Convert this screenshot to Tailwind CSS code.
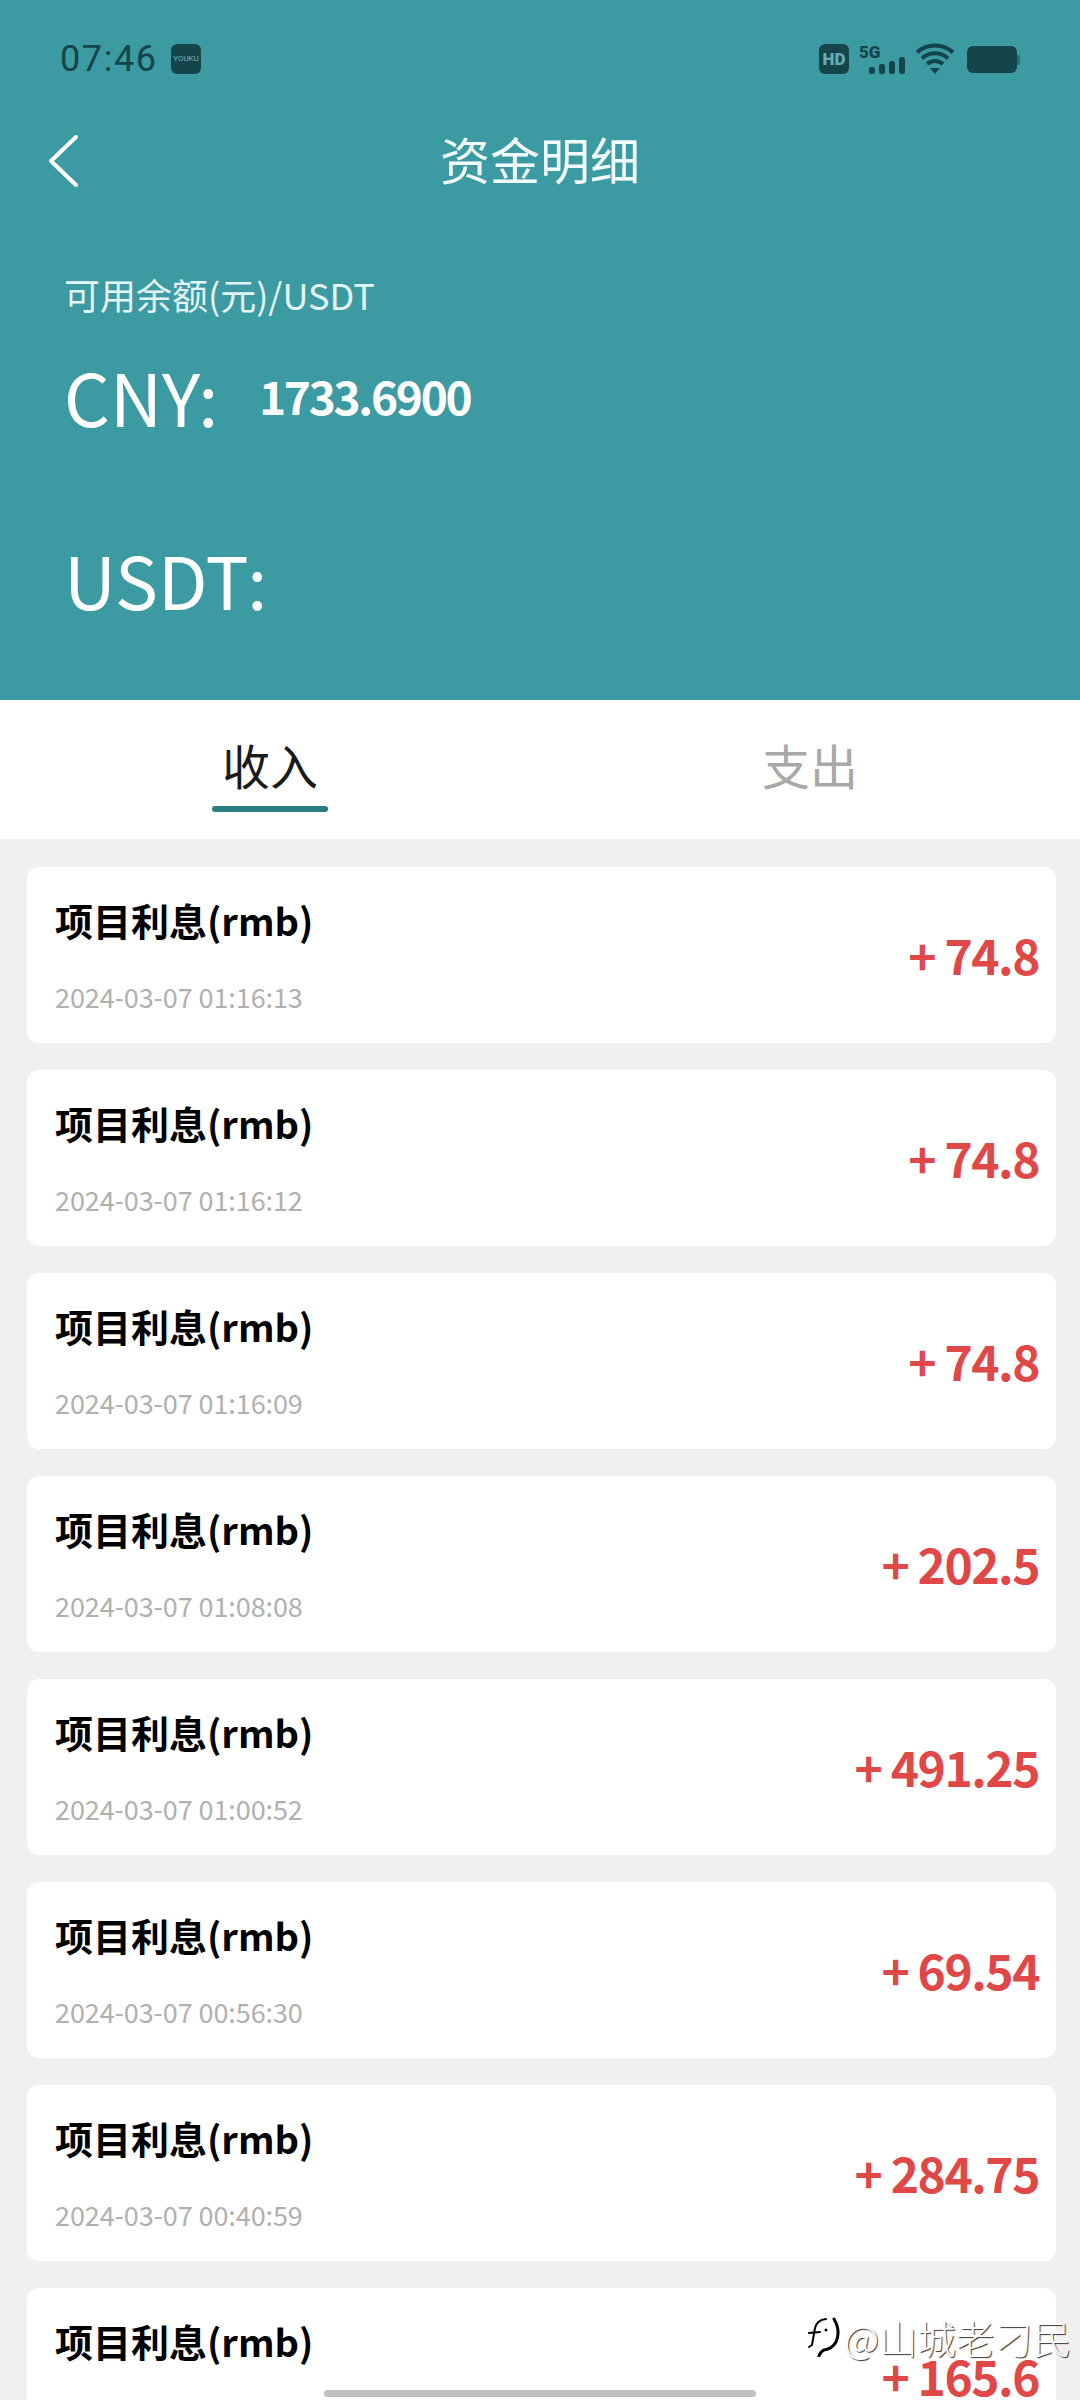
<!DOCTYPE html>
<html lang="en">
<head>
  <meta charset="UTF-8">
  <title>资金明细</title>
  <script src="https://cdn.jsdelivr.net/npm/@tailwindcss/browser@4"></script>
</head>
<body class="bg-[#f0f0f0] font-['Noto_Sans_CJK_SC','Noto_Sans',sans-serif]">
<div class="relative w-[1080px] h-[2400px] overflow-hidden">

  <!-- header -->
  <div class="bg-[#3c9aa2] h-[700px] text-white">
    <div class="flex items-center justify-between h-[116px] pl-[60px] pr-[60px] pt-[1px]">
      <div class="flex items-center gap-[16px]">
        <span class="text-[36px] leading-none text-[#14454b] font-['Roboto',sans-serif] tracking-[1.6px] w-[95px]">07:46</span>
        <span class="flex items-center justify-center w-[30px] h-[30px] rounded-[6px] bg-[#15444a] text-[#6fb5ba] text-[8px] leading-none font-['Roboto',sans-serif]">YOUKU</span>
      </div>
      <svg width="201" height="32" viewBox="0 0 201 32" class="shrink-0">
        <rect x="0" y="1" width="30" height="30" rx="6" fill="#15444a"/>
        <text x="15" y="22" text-anchor="middle" font-family="Roboto" font-weight="900" font-size="17" fill="#5fb0b6">HD</text>
        <text x="40" y="15" font-family="Roboto" font-weight="900" font-size="17" fill="#15444a">5G</text>
        <rect x="50" y="24" width="6" height="7" rx="2.5" fill="#15444a"/>
        <rect x="60" y="21" width="6" height="10" rx="2.5" fill="#15444a"/>
        <rect x="70" y="18" width="6" height="13" rx="2.5" fill="#15444a"/>
        <rect x="80" y="14" width="6" height="17" rx="2.5" fill="#15444a"/>
        <path d="M98 9.5 A27 27 0 0 1 134 9.5" fill="none" stroke="#15444a" stroke-width="4"/>
        <path d="M103 15.5 A19 19 0 0 1 129 15.5" fill="none" stroke="#15444a" stroke-width="4"/>
        <path d="M108 21 A12 12 0 0 1 124 21" fill="none" stroke="#15444a" stroke-width="4"/>
        <path d="M111 25 L121 25 L116 31 Z" fill="#15444a"/>
        <rect x="148" y="3" width="50" height="27" rx="6" fill="#15444a"/>
        <rect x="198" y="12" width="3" height="10" rx="1" fill="#15444a" fill-opacity="0.5"/>
      </svg>
    </div>

    <div class="relative flex items-center justify-center h-[90px]">
      <svg width="32" height="54" viewBox="0 0 32 54" class="absolute left-[47px] top-[18px]">
        <path d="M29 3 L4 27 L29 51" fill="none" stroke="#fff" stroke-width="4" stroke-linecap="round" stroke-linejoin="round"/>
      </svg>
      <h1 class="text-[50px] leading-none text-[#f2fbfb] -translate-y-[3px]">资金明细</h1>
    </div>

    <div class="pl-[64px] pt-[65px]">
      <p class="text-[36px] leading-[46px] text-[#e4f5f5]">可用余额(元)/USDT</p>
      <div class="flex items-center mt-[35px] h-[88px]">
        <span class="text-[72px] leading-[88px] font-normal w-[195px]">CNY:</span>
        <span class="text-[46px] leading-[88px] font-bold tracking-[-2.3px] -translate-y-[1px]">1733.6900</span>
      </div>
      <div class="text-[72px] leading-[88px] font-normal mt-[95px]">USDT:</div>
    </div>
  </div>

  <!-- tabs -->
  <div class="grid grid-cols-2 bg-white h-[139px]">
    <div class="flex flex-col items-center pt-[36px]">
      <span class="text-[48px] leading-[56px] text-[#1a1a1a]">收入</span>
      <span class="w-[116px] h-[6px] mt-[14px] rounded-full bg-[#2a7d80]"></span>
    </div>
    <div class="flex flex-col items-center pt-[36px]">
      <span class="text-[48px] leading-[56px] text-[#a8a8a8]">支出</span>
    </div>
  </div>

  <!-- list -->
  <div class="flex flex-col gap-[27px] pl-[27px] pr-[24px] pt-[28px]">
    <div class="flex items-center justify-between h-[176px] shrink-0 pl-[28px] pr-[17px] bg-white rounded-[12px]">
      <div class="mb-[3px]"><p class="text-[38px] leading-[56px] font-bold text-black">项目利息(rmb)</p><p class="text-[27px] leading-[36px] mt-[31px] text-[#b0b0b0] tracking-[-0.1px]">2024-03-07 01:16:13</p></div>
      <span class="text-[48px] leading-none font-bold text-[#e04848] tracking-[-1.5px] mb-[3px]">+ 74.8</span>
    </div>
    <div class="flex items-center justify-between h-[176px] shrink-0 pl-[28px] pr-[17px] bg-white rounded-[12px]">
      <div class="mb-[3px]"><p class="text-[38px] leading-[56px] font-bold text-black">项目利息(rmb)</p><p class="text-[27px] leading-[36px] mt-[31px] text-[#b0b0b0] tracking-[-0.1px]">2024-03-07 01:16:12</p></div>
      <span class="text-[48px] leading-none font-bold text-[#e04848] tracking-[-1.5px] mb-[3px]">+ 74.8</span>
    </div>
    <div class="flex items-center justify-between h-[176px] shrink-0 pl-[28px] pr-[17px] bg-white rounded-[12px]">
      <div class="mb-[3px]"><p class="text-[38px] leading-[56px] font-bold text-black">项目利息(rmb)</p><p class="text-[27px] leading-[36px] mt-[31px] text-[#b0b0b0] tracking-[-0.1px]">2024-03-07 01:16:09</p></div>
      <span class="text-[48px] leading-none font-bold text-[#e04848] tracking-[-1.5px] mb-[3px]">+ 74.8</span>
    </div>
    <div class="flex items-center justify-between h-[176px] shrink-0 pl-[28px] pr-[17px] bg-white rounded-[12px]">
      <div class="mb-[3px]"><p class="text-[38px] leading-[56px] font-bold text-black">项目利息(rmb)</p><p class="text-[27px] leading-[36px] mt-[31px] text-[#b0b0b0] tracking-[-0.1px]">2024-03-07 01:08:08</p></div>
      <span class="text-[48px] leading-none font-bold text-[#e04848] tracking-[-1.5px] mb-[3px]">+ 202.5</span>
    </div>
    <div class="flex items-center justify-between h-[176px] shrink-0 pl-[28px] pr-[17px] bg-white rounded-[12px]">
      <div class="mb-[3px]"><p class="text-[38px] leading-[56px] font-bold text-black">项目利息(rmb)</p><p class="text-[27px] leading-[36px] mt-[31px] text-[#b0b0b0] tracking-[-0.1px]">2024-03-07 01:00:52</p></div>
      <span class="text-[48px] leading-none font-bold text-[#e04848] tracking-[-1.5px] mb-[3px]">+ 491.25</span>
    </div>
    <div class="flex items-center justify-between h-[176px] shrink-0 pl-[28px] pr-[17px] bg-white rounded-[12px]">
      <div class="mb-[3px]"><p class="text-[38px] leading-[56px] font-bold text-black">项目利息(rmb)</p><p class="text-[27px] leading-[36px] mt-[31px] text-[#b0b0b0] tracking-[-0.1px]">2024-03-07 00:56:30</p></div>
      <span class="text-[48px] leading-none font-bold text-[#e04848] tracking-[-1.5px] mb-[3px]">+ 69.54</span>
    </div>
    <div class="flex items-center justify-between h-[176px] shrink-0 pl-[28px] pr-[17px] bg-white rounded-[12px]">
      <div class="mb-[3px]"><p class="text-[38px] leading-[56px] font-bold text-black">项目利息(rmb)</p><p class="text-[27px] leading-[36px] mt-[31px] text-[#b0b0b0] tracking-[-0.1px]">2024-03-07 00:40:59</p></div>
      <span class="text-[48px] leading-none font-bold text-[#e04848] tracking-[-1.5px] mb-[3px]">+ 284.75</span>
    </div>
    <div class="flex items-center justify-between h-[176px] shrink-0 pl-[28px] pr-[17px] bg-white rounded-[12px]">
      <div class="mb-[3px]"><p class="text-[38px] leading-[56px] font-bold text-black">项目利息(rmb)</p><p class="text-[27px] leading-[36px] mt-[31px] text-[#b0b0b0] tracking-[-0.1px]">2024-03-07 00:32:11</p></div>
      <span class="text-[48px] leading-none font-bold text-[#e04848] tracking-[-1.5px] mb-[3px]">+ 165.6</span>
    </div>
  </div>

  <!-- watermark -->
  <div class="absolute left-[806px] top-[2317px] flex items-center gap-[4px]">
    <svg width="34" height="40" viewBox="0 0 34 40">
      <path d="M3 30 L6 28 L9 11 Q11 3 20 2" fill="none" stroke="#000" stroke-width="2" stroke-linecap="round"/>
      <path d="M3 16 L14 15" fill="none" stroke="#000" stroke-width="2" stroke-linecap="round"/>
      <path d="M28 2 Q35 14 30 25 Q26 32 18 33 Q14 35 13 39" fill="none" stroke="#000" stroke-width="3" stroke-linecap="round"/>
      <circle cx="20" cy="13" r="1.5" fill="#000"/>
    </svg>
    <span class="text-[38.5px] leading-none font-light text-white [text-shadow:1px_1px_1px_#333]">@山城老刁民</span>
  </div>

  <!-- home bar -->
  <div class="absolute left-[324px] top-[2390px] w-[432px] h-[7px] rounded-full bg-[#c0c0c0]"></div>
</div>
</body>
</html>
